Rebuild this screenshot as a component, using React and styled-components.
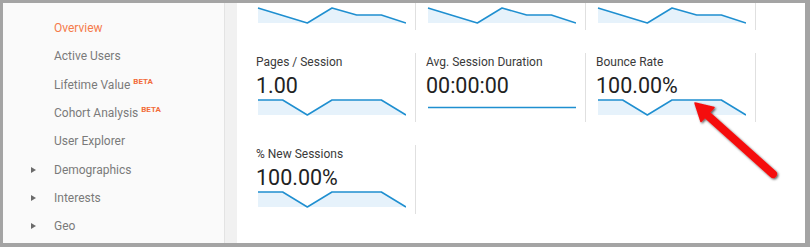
import styled, { createGlobalStyle } from "styled-components";

const GlobalStyle = createGlobalStyle`
  * { box-sizing: border-box; }
  body {
    margin: 0;
    font-family: Roboto, "Liberation Sans", Arial, sans-serif;
    background: #fff;
  }
`;

const menu = [
  { label: "Overview", active: true },
  { label: "Active Users" },
  { label: "Lifetime Value", beta: true },
  { label: "Cohort Analysis", beta: true },
  { label: "User Explorer" },
  { label: "Demographics", caret: true },
  { label: "Interests", caret: true },
  { label: "Geo", caret: true },
];

const wave = [0, 0.5, 1, 0, 0.47, 0.47, 1];
const dip = [0, 0, 1, 0, 0, 0, 1];

// first row is scrolled up, only the sparklines still show
const metrics = [
  { id: "sessions", data: wave, scrolled: true },
  { id: "users", data: wave, scrolled: true },
  { id: "pageviews", data: wave, scrolled: true },
  { id: "pps", label: "Pages / Session", value: "1.00", data: dip },
  { id: "dur", label: "Avg. Session Duration", value: "00:00:00", flat: true },
  { id: "bounce", label: "Bounce Rate", value: "100.00%", data: dip },
  { id: "new", label: "% New Sessions", value: "100.00%", data: dip },
];

function Sparkline({ data, flat }) {
  const w = 150;
  const h = 17;
  if (flat) {
    return (
      <Spark width={w} height={h}>
        <line x1="2" y1="8.5" x2={w} y2="8.5" stroke="#1f8fd0" strokeWidth="1.6" />
      </Spark>
    );
  }
  const step = (w - 2) / (data.length - 1);
  const pts = data.map((v, i) => `${2 + i * step},${1 + v * 15}`).join(" ");
  return (
    <Spark width={w} height={h}>
      <polygon points={`2,16 ${pts} ${w},16`} fill="#e6f2fb" />
      <polyline points={pts} fill="none" stroke="#1f8fd0" strokeWidth="1.5" strokeLinejoin="round" />
    </Spark>
  );
}

export default function App() {
  return (
    <>
      <GlobalStyle />
      <Frame>
        <Sidebar>
          {menu.map((m) => (
            <Item key={m.label} $active={m.active}>
              <CaretSlot>{m.caret && <Caret />}</CaretSlot>
              {m.label}
              {m.beta && <Beta>BETA</Beta>}
            </Item>
          ))}
        </Sidebar>
        <Gutter />
        <Content>
          <Grid>
            {metrics.map((m) => (
              <Card key={m.id} $scrolled={m.scrolled}>
                {m.label && <Label>{m.label}</Label>}
                {m.value && <Value>{m.value}</Value>}
                <Sparkline data={m.data} flat={m.flat} />
              </Card>
            ))}
          </Grid>
        </Content>
        <Arrow viewBox="0 0 810 247" width="810" height="247">
          <defs>
            <filter id="shadow" x="-20%" y="-20%" width="140%" height="140%">
              <feDropShadow dx="1.2" dy="1.2" stdDeviation="1.1" floodColor="#000" floodOpacity="0.65" />
            </filter>
          </defs>
          <g filter="url(#shadow)" fill="#f50f0f" stroke="#f50f0f">
            <line x1="705" y1="113" x2="773" y2="174" strokeWidth="8" strokeLinecap="round" />
            <polygon points="695,103 714,107.5 701,121.5" strokeWidth="1.5" strokeLinejoin="round" />
          </g>
        </Arrow>
      </Frame>
    </>
  );
}

const Frame = styled.div`
  position: relative;
  width: 810px;
  height: 247px;
  display: flex;
  border-style: solid;
  border-color: #a4a4a4;
  border-width: 3px 5px 4px 3px;
  overflow: hidden;
`;

const Sidebar = styled.div`
  width: 222px;
  flex-shrink: 0;
  background: #fafafa;
  border-right: 1px solid #e3e3e3;
  padding-top: 11px;
`;

const Item = styled.div`
  display: flex;
  align-items: center;
  height: 28.3px;
  padding-left: 28px;
  font-size: 12px;
  color: ${(p) => (p.$active ? "#f57b4b" : "#7a7a7a")};
`;

const CaretSlot = styled.span`
  width: 23px;
  display: flex;
  align-items: center;
`;

const Caret = styled.span`
  width: 0;
  height: 0;
  border-top: 3.5px solid transparent;
  border-bottom: 3.5px solid transparent;
  border-left: 5px solid #6b6b6b;
`;

const Beta = styled.span`
  align-self: flex-start;
  margin-top: 6px;
  margin-left: 3px;
  font-size: 8px;
  font-weight: 700;
  color: #f26b3a;
`;

const Gutter = styled.div`
  width: 12px;
  flex-shrink: 0;
  background: #f1f1f1;
`;

const Content = styled.div`
  flex: 1;
  background: #fff;
  padding-left: 9px;
  overflow: hidden;
`;

const Grid = styled.div`
  display: grid;
  grid-template-columns: repeat(3, 170px);
  row-gap: 23px;
`;

const Card = styled.div`
  height: ${(p) => (p.$scrolled ? "27px" : "69px")};
  padding: ${(p) => (p.$scrolled ? "4px" : "2px")} 10px 0;
  border-right: 1px solid #e0e0e0;
`;

const Label = styled.div`
  font-size: 12px;
  line-height: 14px;
  color: #3a3a3a;
  margin-bottom: 3.5px;
  white-space: nowrap;
`;

const Value = styled.div`
  font-size: 21.5px;
  line-height: 26px;
  color: #222;
  white-space: nowrap;
`;

const Spark = styled.svg`
  display: block;
`;

const Arrow = styled.svg`
  position: absolute;
  left: -3px;
  top: -3px;
  pointer-events: none;
`;
